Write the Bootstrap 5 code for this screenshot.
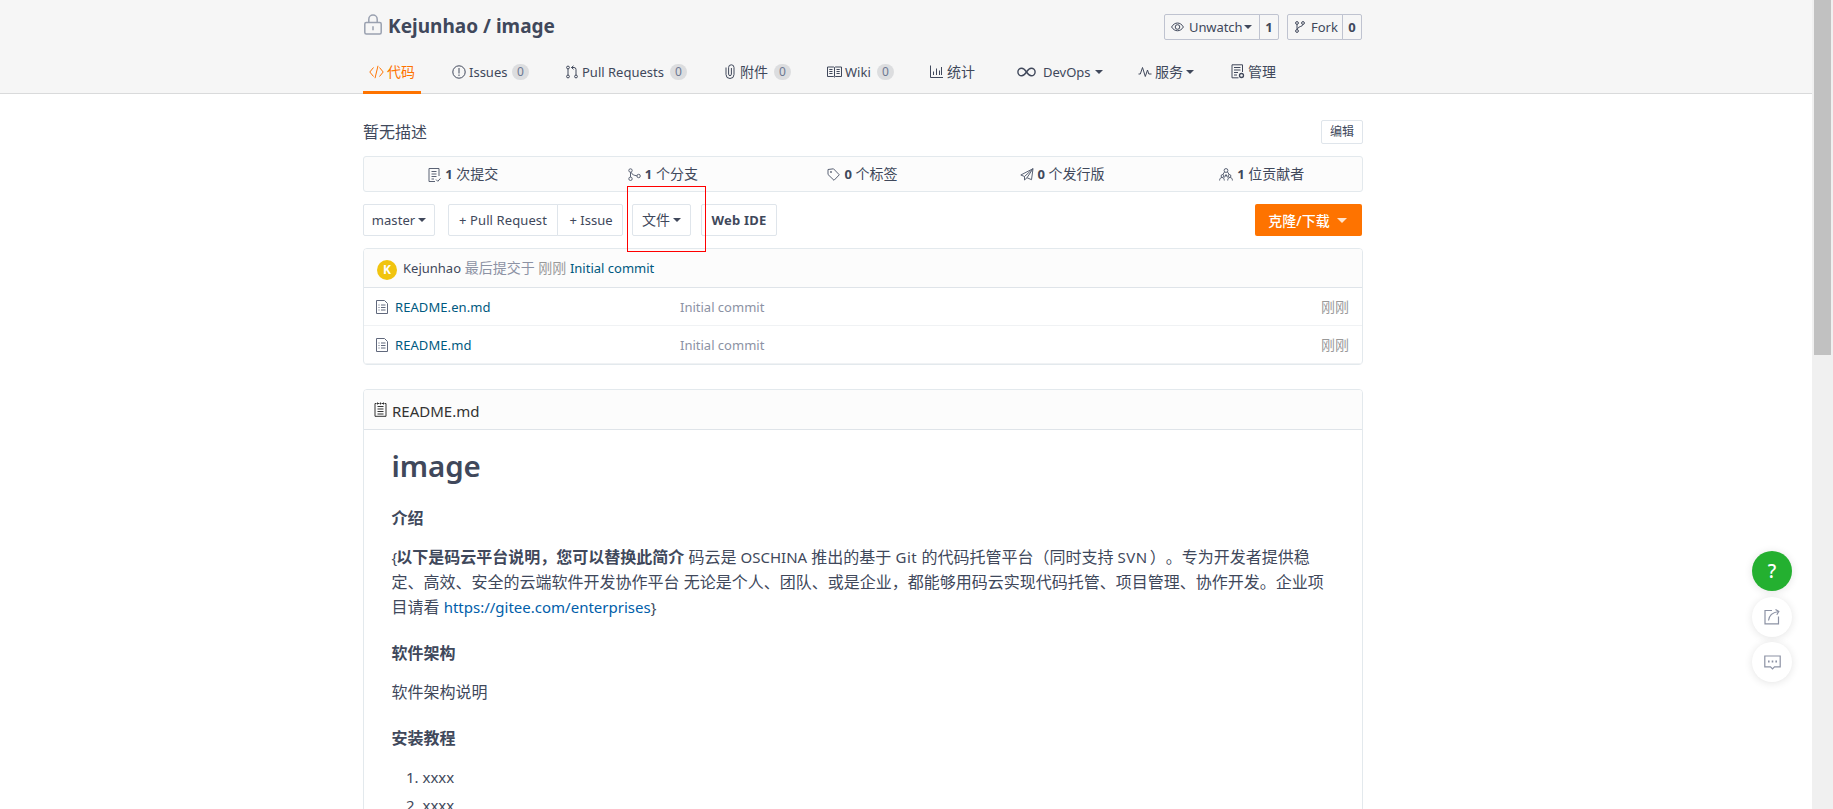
<!DOCTYPE html>
<html lang="zh-CN">
<head>
<meta charset="utf-8">
<title>Kejunhao / image</title>
<meta name="viewport" content="width=device-width, initial-scale=1">
<link href="https://cdn.jsdelivr.net/npm/bootstrap@5.3.0/dist/css/bootstrap.min.css" rel="stylesheet">
<style>
html,body{height:100%;overflow:hidden}
body{font-family:"Noto Sans","Noto Sans CJK SC",sans-serif;font-size:14px;line-height:20px;color:#40485b;background:#fff;text-spacing-trim:space-all}
svg{fill:none;stroke:currentColor;stroke-width:1;flex:none;display:block}
.wrap{width:1000px;margin-left:363px}
.lat{font-size:.9286em}
.page-head{height:94px;background:#f6f6f6;border-bottom:1px solid #d9dadb}
.repo-name{font-size:19px;font-weight:700;letter-spacing:.02px;line-height:26px;margin-top:-1px}
.head-top{height:54px;padding-top:14px}
.head-top .btn{--bs-btn-padding-x:0;--bs-btn-padding-y:0;height:26px;border-color:#bfc3d0;border-radius:2px;color:#40485b;font-size:13px;line-height:24px;display:flex;align-items:center}
.caret{display:inline-block;border:4px solid transparent;border-top:4px solid currentColor;border-bottom:0;flex:none}
.tabs{display:grid;grid-template-columns:89px 114px 159px 102px 103px 87px 121px 93px auto;height:40px}
.tabs .nav-link{padding:0;height:40px;color:#40485b;display:grid;align-items:center;padding-bottom:5px;white-space:nowrap;justify-content:start}
.tabs .nav-link.active{color:#fe7300;border-bottom:3px solid #fe7300;width:58px;padding:0 0 2px 6px}
.count{font-size:12px;line-height:16px;height:16px;width:17px;text-align:center;border-radius:8px;background:#dcdddf;color:#6d7892}
.g-code{grid-template-columns:18px auto}
.g-issue{grid-template-columns:17px 43px auto}
.g-pull{grid-template-columns:16px 88px auto}
.g-clip{grid-template-columns:15px 34px auto}
.g-wiki{grid-template-columns:18px 32px auto}
.g-stat{grid-template-columns:17px auto}
.g-ops{grid-template-columns:26px 52px auto}
.g-srv{grid-template-columns:17px 31px auto}
.outline{border:1px solid #dfe5eb;border-radius:2px;background:#fff;color:#40485b;font-size:14px;padding:0;line-height:30px;height:32px;white-space:nowrap;display:flex;align-items:center;justify-content:center}
.edit{width:42px;height:24px;font-size:12px;line-height:24px}
.stats{height:36px;border:1px solid #e3e9ed;border-radius:3px;background:#fcfcfc}
.stats>div{gap:4px;padding-bottom:1px;padding-right:1px}
.stats svg{position:relative;top:1px;color:#5a6274}
.toolbar{height:32px;margin-top:12px;z-index:2}
.clone{width:107px;height:32px;margin-right:1px;background:#fe7300;color:#fff;font-weight:500;border:0;border-radius:2px;padding:0 2px 0 0;font-size:14px;gap:7px}
.clone .caret{border-width:5px 5px 0;opacity:.8}
.red-frame{position:absolute;left:264px;top:-18px;width:79px;height:66px;border:1px solid #f00}
.panel{--bs-card-border-color:#e3e9ed;--bs-card-border-radius:4px;--bs-card-inner-border-radius:3px;--bs-card-cap-bg:#fcfcfc;--bs-card-color:#40485b;--bs-card-cap-padding-y:0;--bs-card-cap-padding-x:0}
.panel .card-header{border-bottom-color:#dfe4e9;flex-shrink:0}
.files{margin-top:12px;height:117px}
.files .card-header{height:39px;padding:0 12px 0 13px;font-size:14px}
.file-row{height:38px;border-bottom:1px solid #f0f2f4;padding:0 13px 0 12px;color:#8c92a4}
.file-row a,.files .msg{color:#005980;text-decoration:none}
.file-name{width:304px;gap:7px;color:#60687c}
.file-name .lat{letter-spacing:.08px}
.muted{color:#8c92a4}
.avatar{width:20px;height:20px;border-radius:50%;background:#f1c40f;color:#fff;font-size:12px;font-weight:700;line-height:20px;text-align:center;margin:3px 6px 0 0}
.readme{margin-top:24px;height:500px}
.readme .card-header{height:40px;padding:3px 10px 0;font-size:15px;color:#333;gap:5px}
.md{padding:0 27.5px;font-size:16px;line-height:25px}
.md h1{font-size:29.5px;font-weight:600;letter-spacing:-.1px;line-height:40px;margin:16px 0 0}
.md h4{font-size:16px;font-weight:700;line-height:24px;margin:0}
.md p{margin:0}
.md .lat{font-size:15px}
.md a{color:#005eaa;text-decoration:none}
.md ol{margin:0;padding-left:31px;font-size:15px}
.md li{line-height:28px}
.floaters{position:absolute;left:1752px;top:551px;gap:5.500px}
.floaters .btn{width:40px;height:40px;border-radius:50%;border:0;padding:0;background:#fff;color:#8c92a4;box-shadow:0 1px 8px rgba(0,0,0,.11)}
.floaters .help{background:#24b030;color:#fff;font-size:19px;font-weight:500}
.track{width:21px;background:#f0f0f0;padding:0 2px}
.thumb{height:355px;background:#c1c1c1}
</style>
</head>
<body class="d-flex position-relative">
<main class="flex-grow-1 overflow-hidden">
<header class="page-head">
 <div class="wrap">
  <div class="head-top d-flex align-items-start">
   <div class="d-flex">
    <svg width="20" height="22" viewBox="0 0 20 22" style="color:#9aa1b0;stroke-width:1.5;margin:0 4px 0 1px"><rect x=".8" y="8.500" width="16.400" height="11.500" rx="1.500"/><path d="M4.800 8.500V5.300a4.200 4.200 0 0 1 8.400 0V8.500M9 12.300v4"/></svg>
    <div class="repo-name">Kejunhao / image</div>
   </div>
   <div class="btn-group ms-auto" style="margin-right:8px">
    <button class="btn" style="width:96px"><svg style="margin-left:6px;margin-right:5px" width="13" height="10" viewBox="0 0 13 10"><path d="M.6 5C3.500-.3 9.500-.3 12.400 5 9.500 10 3.500 10 .6 5z"/><circle cx="6.500" cy="5" r="2.300"/></svg><span style="letter-spacing:-.1px">Unwatch</span><span class="caret" style="margin-left:2px"></span></button>
    <button class="btn justify-content-center fw-bold" style="width:20px">1</button>
   </div>
   <div class="btn-group" style="margin-right:1px">
    <button class="btn" style="width:56px"><svg style="margin:0 6px 0 7px" width="10" height="12" viewBox="0 0 10 12"><circle cx="2" cy="2" r="1.400"/><circle cx="2" cy="10" r="1.400"/><circle cx="8" cy="2" r="1.400"/><path d="M2 3.400v5.200M8 3.400C8 6 2.500 5 2.200 8.500"/></svg>Fork</button>
    <button class="btn justify-content-center fw-bold" style="width:20px">0</button>
   </div>
  </div>
  <nav class="tabs">
   <a class="nav-link active g-code" href="#"><svg width="15" height="14" viewBox="0 0 15 14"><path d="M4.500 2.500.8 7l3.700 4.500M10.500 2.500 14.200 7l-3.700 4.500M9 .8 6 13.200"/></svg><span>代码</span></a>
   <a class="nav-link g-issue" href="#"><svg width="14" height="14" viewBox="0 0 14 14"><circle cx="7" cy="7" r="6.200"/><path d="M7 3v5.500M7 9.500V11"/></svg><span class="lat">Issues</span><span class="count">0</span></a>
   <a class="nav-link g-pull" href="#"><svg width="12" height="14" viewBox="0 0 12 14"><circle cx="2" cy="2.500" r="1.400"/><circle cx="2" cy="11.500" r="1.400"/><circle cx="10" cy="11.500" r="1.400"/><path d="M2 4v6M10 10V4.500Q10 2.500 8 2.500H5.500M7.500.8 5.500 2.500l2 1.800"/></svg><span class="lat">Pull Requests</span><span class="count">0</span></a>
   <a class="nav-link g-clip" href="#"><svg width="10" height="15" viewBox="0 0 10 15"><path d="M1 3.500V10.500a4 4 0 0 0 8 0V3.500a2.700 2.700 0 0 0-5.400 0v6.700a1.400 1.400 0 0 0 2.800 0V4"/></svg><span>附件</span><span class="count">0</span></a>
   <a class="nav-link g-wiki" href="#"><svg width="15" height="12" viewBox="0 0 15 12"><path d="M.5 1h6.200l.8.600.8-.600h6.200v9.500H8.300l-.8.600-.8-.600H.5zM7.500 1.500v9M2.300 3.500h3.200M2.300 5.500h3.200M2.300 7.500h3.200M9.500 3.500h3.200M9.500 5.500h3.200M9.500 7.500h3.200"/></svg><span class="lat">Wiki</span><span class="count">0</span></a>
   <a class="nav-link g-stat" href="#"><svg width="13" height="13" viewBox="0 0 13 13"><path d="M.5.5v12H13M3.500 6.500V10M6.500 3.500V10M9.500 5.500V10M11.500 2V10"/></svg><span>统计</span></a>
   <a class="nav-link g-ops" href="#"><svg width="19" height="10" viewBox="0 0 19 10" style="stroke-width:1.4"><path d="M9.500 5C7.500 2 6 1.200 4.700 1.200a3.800 3.800 0 0 0 0 7.600C6 8.800 7.500 8 9.500 5s3.500-3.800 4.800-3.800a3.800 3.800 0 0 1 0 7.600C13 8.800 11.500 8 9.500 5z"/></svg><span class="lat">DevOps</span><span class="caret"></span></a>
   <a class="nav-link g-srv" href="#"><svg width="14" height="12" viewBox="0 0 14 12"><path d="M.5 8h1.800L4.500 1.500l2.800 9L9.500 4l1.300 4h2.700"/></svg><span>服务</span><span class="caret"></span></a>
   <a class="nav-link g-stat" href="#"><svg width="14" height="15" viewBox="0 0 14 15"><path d="M11.500 8V.8H1v13h6.500M3 3.500h6.500M3 6h6.500M3 8.500h4M3 11h3"/><circle cx="10.500" cy="11.500" r="2" stroke-width="1.300"/></svg><span>管理</span></a>
  </nav>
 </div>
</header>

<div class="wrap">
 <div class="d-flex justify-content-between align-items-center" style="margin-top:26px;height:24px">
  <div class="fs-6">暂无描述</div>
  <button class="btn outline edit">编辑</button>
 </div>
 <div class="stats d-flex" style="margin-top:12px">
  <div class="col d-flex align-items-center justify-content-center"><svg width="13" height="14" viewBox="0 0 13 14"><path d="M11 8V.5H1v13h6M3.500 3.500h5M3.500 6h5M3.500 8.500h5M3.500 11H6M8 11.500l1.800 1.800 2.700-3"/></svg><span><b class="lat">1</b> 次提交</span></div>
  <div class="col d-flex align-items-center justify-content-center"><svg width="13" height="13" viewBox="0 0 13 13"><circle cx="2.500" cy="2.500" r="1.700"/><circle cx="2.500" cy="10.800" r="1.700"/><circle cx="10.600" cy="8" r="1.700"/><path d="M2.500 4.200v4.900M3 4.200C4 6.500 6 7.500 8.900 7.800"/></svg><span><b class="lat">1</b> 个分支</span></div>
  <div class="col d-flex align-items-center justify-content-center"><svg width="13" height="13" viewBox="0 0 13 13"><path d="M1 1.500 6.500.8l5.800 6L7 12.300 1 6.500z"/><circle cx="4" cy="4" r=".6"/></svg><span><b class="lat">0</b> 个标签</span></div>
  <div class="col d-flex align-items-center justify-content-center"><svg width="14" height="13" viewBox="0 0 14 13"><path d="M13 .7.8 7l3.700 1.500L13 .7l-1.500 11-4.500-2L13 .7M4.500 8.500V12L7 9.700"/></svg><span><b class="lat">0</b> 个发行版</span></div>
  <div class="col d-flex align-items-center justify-content-center"><svg width="14" height="13" viewBox="0 0 14 13"><circle cx="7" cy="2.500" r="1.900"/><path d="M5.500 4 3.500 7M8.500 4l2 3M.6 12.500c0-2 1-3 2.400-3s2.300 1 2.300 3M8.700 12.500c0-2 1-3 2.400-3s2.300 1 2.300 3M5.500 9.500 7 6.500l1.500 3"/><circle cx="3.500" cy="8" r="1.400"/><circle cx="10.500" cy="8" r="1.400"/></svg><span><b class="lat">1</b> 位贡献者</span></div>
 </div>
 <div class="toolbar d-flex position-relative">
  <button class="btn outline" style="width:72px"><span class="lat" style="letter-spacing:.1px">master</span><span class="caret" style="margin-left:3px"></span></button>
  <div class="btn-group" style="margin-left:13px">
   <button class="btn outline" style="width:110px"><span class="lat" style="letter-spacing:.1px">+ Pull Request</span></button>
   <button class="btn outline" style="width:66px"><span class="lat" style="padding-left:2px">+ Issue</span></button>
  </div>
  <button class="btn outline" style="width:59px;margin-left:9px">文件<span class="caret" style="margin-left:3px"></span></button>
  <button class="btn outline fw-bold" style="width:76px;margin-left:10px"><span class="lat" style="letter-spacing:.2px">Web IDE</span></button>
  <button class="btn clone ms-auto d-flex align-items-center justify-content-center">克隆/下载<span class="caret"></span></button>
  <div class="red-frame"></div>
 </div>
 <section class="card panel files">
  <div class="card-header d-flex align-items-center"><span class="avatar">K</span><span><span class="lat">Kejunhao</span> <span class="muted">最后提交于 <span style="color:#999">刚刚</span></span> <a class="msg lat" href="#">Initial commit</a></span></div>
  <div class="file-row d-flex align-items-center"><div class="file-name d-flex align-items-center"><svg width="12" height="14" viewBox="0 0 12 14"><path d="M.5.500H8.500L11.500 3.500v10H.5zM2.500 5h1M5 5h4.500M2.500 7.500h1M5 7.500h4.500M2.500 10h1M5 10h4.500"/></svg><a class="lat" href="#">README.en.md</a></div><span class="lat">Initial commit</span><span class="ms-auto" style="color:#999">刚刚</span></div>
  <div class="file-row d-flex align-items-center"><div class="file-name d-flex align-items-center"><svg width="12" height="14" viewBox="0 0 12 14"><path d="M.5.500H8.500L11.500 3.500v10H.5zM2.500 5h1M5 5h4.500M2.500 7.500h1M5 7.500h4.500M2.500 10h1M5 10h4.500"/></svg><a class="lat" href="#">README.md</a></div><span class="lat">Initial commit</span><span class="ms-auto" style="color:#999">刚刚</span></div>
 </section>
 <section class="card panel readme">
  <div class="card-header d-flex align-items-center"><svg width="13" height="15" viewBox="0 0 13 15" style="position:relative;top:-2px"><path d="M2.500 1.500H1v12.800h11V1.500h-1.500M4 1.500h1.500M7.500 1.500H9M3.500 4.500h6M3.500 7h6M3.500 9.500h6M3.500 12h6M3.500.5v2M9.500.5v2M6.500.5v2"/></svg><span>README.md</span></div>
  <div class="md">
   <h1>image</h1>
   <h4 style="margin-top:20px">介绍</h4>
   <p style="margin-top:15px" class="text-nowrap"><span class="lat" style="margin-right:-1px">{</span><b>以下是码云平台说明，您可以替换此简介</b> 码云是 <span class="lat">OSCHINA</span> 推出的基于 <span class="lat" style="letter-spacing:.5px">Git</span> 的代码托管平台（同时支持 <span class="lat" style="letter-spacing:.5px;margin-right:2px">SVN</span>）<span>。</span>专为开发者提供稳<br>定、高效、安全的云端软件开发协作平台 无论是个人、团队、或是企业，都能够用码云实现代码托管、项目管理、协作开发。企业项<br>目请看 <span class="lat"><a href="#">https://gitee.com/enterprises</a>}</span></p>
   <h4 style="margin-top:21px">软件架构</h4>
   <p style="margin-top:15px">软件架构说明</p>
   <h4 style="margin-top:21px">安装教程</h4>
   <ol style="margin-top:13px"><li>xxxx</li><li>xxxx</li></ol>
  </div>
 </section>
</div>
</main>
<div class="floaters d-flex flex-column">
 <button class="btn help">?</button>
 <button class="btn d-flex align-items-center justify-content-center"><svg width="16" height="16" viewBox="0 0 16 16" style="stroke-width:1.2"><path d="M8 1.500H1v13.300h13.500V7.500M4.500 11.500C5 7 8 3.500 14.500 2.500M11.500.5l3.300 2-2 3.200"/></svg></button>
 <button class="btn d-flex align-items-center justify-content-center"><svg width="17" height="15" viewBox="0 0 17 15" style="stroke-width:1.2"><path d="M.8 1h15.400v10.800H10.500L8.500 13.800 6.500 11.800H.8z"/><path stroke-width="2" d="M4 6.500h1.600M7.700 6.500h1.600M11.400 6.500H13"/></svg></button>
</div>
<div class="track flex-shrink-0"><div class="thumb"></div></div>
<script src="https://cdn.jsdelivr.net/npm/bootstrap@5.3.0/dist/js/bootstrap.bundle.min.js"></script>
</body>
</html>
